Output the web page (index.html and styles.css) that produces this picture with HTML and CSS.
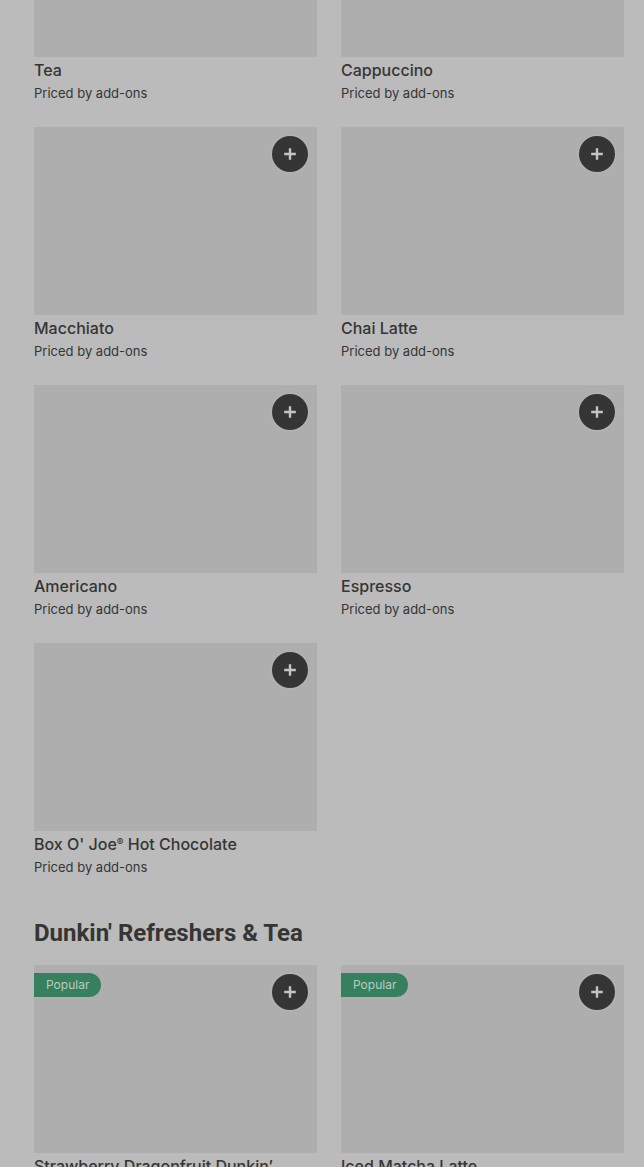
FILE: index.html
```html
<!DOCTYPE html>
<html lang="en">
<head>
  <meta charset="UTF-8">
  <meta name="viewport" content="width=device-width, initial-scale=1.0">
  <title>Menu</title>
  <link rel="stylesheet" href="styles.css">
</head>
<body>
  <svg width="0" height="0" class="sprite" aria-hidden="true">
    <symbol id="plus" viewBox="0 0 16 16">
      <path d="M8 2.2v11.6M2.2 8h11.6" fill="none" stroke="currentColor" stroke-width="2.4"/>
    </symbol>
  </svg>

  <main class="menu">
    <section>
      <ul class="items">
        <li>
          <div class="photo"><button class="add" aria-label="Add Tea"><svg><use href="#plus"/></svg></button></div>
          <h3>Tea</h3>
          <p>Priced by add-ons</p>
        </li>
        <li>
          <div class="photo"><button class="add" aria-label="Add Cappuccino"><svg><use href="#plus"/></svg></button></div>
          <h3>Cappuccino</h3>
          <p>Priced by add-ons</p>
        </li>
        <li>
          <div class="photo"><button class="add" aria-label="Add Macchiato"><svg><use href="#plus"/></svg></button></div>
          <h3>Macchiato</h3>
          <p>Priced by add-ons</p>
        </li>
        <li>
          <div class="photo"><button class="add" aria-label="Add Chai Latte"><svg><use href="#plus"/></svg></button></div>
          <h3>Chai Latte</h3>
          <p>Priced by add-ons</p>
        </li>
        <li>
          <div class="photo"><button class="add" aria-label="Add Americano"><svg><use href="#plus"/></svg></button></div>
          <h3>Americano</h3>
          <p>Priced by add-ons</p>
        </li>
        <li>
          <div class="photo"><button class="add" aria-label="Add Espresso"><svg><use href="#plus"/></svg></button></div>
          <h3>Espresso</h3>
          <p>Priced by add-ons</p>
        </li>
        <li>
          <div class="photo"><button class="add" aria-label="Add Box O' Joe Hot Chocolate"><svg><use href="#plus"/></svg></button></div>
          <h3>Box O' Joe<span class="reg">®</span> Hot Chocolate</h3>
          <p>Priced by add-ons</p>
        </li>
      </ul>
    </section>

    <section>
      <h2>Dunkin' Refreshers &amp; Tea</h2>
      <ul class="items">
        <li>
          <div class="photo"><span class="badge">Popular</span><button class="add" aria-label="Add Strawberry Dragonfruit Dunkin’"><svg><use href="#plus"/></svg></button></div>
          <h3>Strawberry Dragonfruit Dunkin’</h3>
        </li>
        <li>
          <div class="photo"><span class="badge">Popular</span><button class="add" aria-label="Add Iced Matcha Latte"><svg><use href="#plus"/></svg></button></div>
          <h3>Iced Matcha Latte</h3>
        </li>
      </ul>
    </section>
  </main>
</body>
</html>
```

FILE: styles.css
```css
* { box-sizing: border-box; }
body {
  font-family: Inter, Roboto, sans-serif;
  margin: 0;
  height: 100vh;
  overflow: hidden;
  background: #bbb;
  color: #353535;
}
.sprite { position: absolute; }

/* list is scrolled part way into its first row */
.menu {
  margin-top: -131px;
  padding: 0 20px 0 34px;
}
.items {
  display: grid;
  grid-template-columns: 1fr 1fr;
  gap: 24px;
  list-style: none;
  margin: 0;
  padding: 0;
}
.photo {
  position: relative;
  height: 188px;
  margin-bottom: 2px;
  background: #aeaeae;
}
h2 {
  margin: 40px 0 16px;
  font-family: Roboto, sans-serif;
  font-size: 24px;
  line-height: 32px;
  font-weight: 700;
}
h3 {
  margin: 0 0 2px;
  font-size: 16px;
  line-height: 22px;
  font-weight: 500;
}
.reg {
  font-size: 10px;
  line-height: 1;
  vertical-align: 4px;
}
p {
  margin: 0;
  font-size: 13px;
  line-height: 20px;
}
.add {
  position: absolute;
  top: 9px;
  right: 9px;
  display: flex;
  align-items: center;
  justify-content: center;
  width: 36px;
  height: 36px;
  padding: 0;
  border: none;
  border-radius: 50%;
  background: #353535;
  color: #c4c4c4;
  box-shadow: 0 0 2px 1px #b6b6b6;
  cursor: pointer;
}
.add svg { width: 16px; height: 16px; }
.badge {
  position: absolute;
  top: 8px;
  left: 0;
  padding: 0 12px;
  border-radius: 0 12px 12px 0;
  background: #37805d;
  color: #b9cbc1;
  font-size: 12px;
  line-height: 24px;
}
```
